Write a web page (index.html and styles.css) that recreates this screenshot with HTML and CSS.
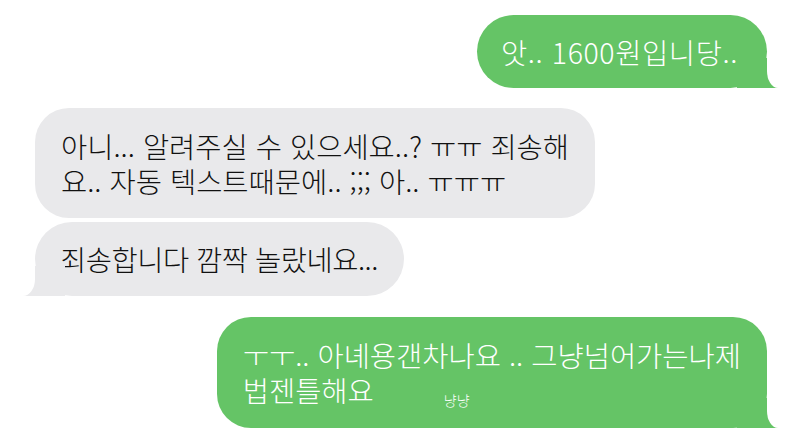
FILE: index.html
```html
<!DOCTYPE html>
<html lang="ko">
<head>
  <meta charset="UTF-8" />
  <meta name="viewport" content="width=device-width, initial-scale=1.0">
  <title>메시지</title>
  <link rel="stylesheet" href="styles.css">
</head>
<body>

  <div class="chat">
    <div class="bubble sent first tail">앗.. 1600원입니당..</div>

    <div class="bubble received second">아니... 알려주실 수 있으세요..? ㅠㅠ 죄송해<br>요.. 자동 텍스트때문에.. ;;; 아.. ㅠㅠㅠ</div>
    <div class="bubble received third tail">죄송합니다 깜짝 놀랐네요...</div>

    <div class="bubble sent fourth tail">ㅜㅜ.. 아녜용갠차나요 .. 그냥넘어가는나제<br>법젠틀해요<span class="tiny">냥냥</span></div>
  </div>

</body>
</html>
```

FILE: styles.css
```css
body {
  margin: 0;
  background: #ffffff;
  font-family: 'Noto Sans CJK KR', 'Noto Sans', sans-serif;
}

.chat {
  display: flex;
  flex-direction: column;
  padding-top: 15px;
}

.bubble {
  position: relative;
  font-size: 28.5px;
  font-weight: 300;
  line-height: 35px;
  padding: 19px 28px 19px 26px;
  border-radius: 37px;
  white-space: nowrap;
}

.sent {
  align-self: flex-end;
  margin-right: 19px;
  background: #65c466;
  color: #fff;
}

.received {
  align-self: flex-start;
  margin-left: 35px;
  background: #e9e9eb;
  color: #111;
}

.first {
  padding-left: 24px;
  padding-right: 29px;
  letter-spacing: 0.6px;
}

.second {
  margin-top: 20px;
  padding: 20px 26px 20px 26px;
  border-radius: 34px;
}

.third {
  margin-top: 4px;
  padding: 19px 26px 20px 25px;
  letter-spacing: -0.5px;
}

.fourth {
  margin-top: 21px;
  padding: 20px 26px 21px 26px;
  border-radius: 34px;
}

.tiny {
  font-size: 14px;
  line-height: 1;
  margin-left: 70px;
  vertical-align: -4px;
}

/* tails */
.tail::before,
.tail::after {
  content: "";
  position: absolute;
  bottom: 0;
  height: 30px;
}

.sent.tail::before {
  right: -11px;
  width: 41px;
  background: #65c466;
}

.sent.tail::after {
  right: -24px;
  width: 24px;
  background: #fff;
  border-bottom-left-radius: 11px 17px;
}

.received.tail::before {
  left: -12px;
  width: 42px;
  background: #e9e9eb;
}

.received.tail::after {
  left: -24px;
  width: 24px;
  background: #fff;
  border-bottom-right-radius: 12px 17px;
}
```
